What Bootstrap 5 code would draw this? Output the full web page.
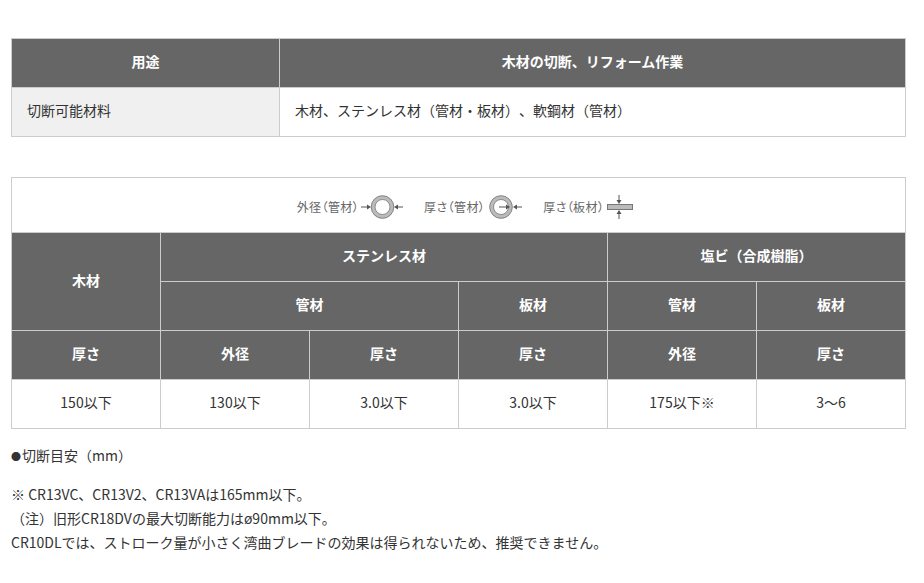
<!DOCTYPE html>
<html lang="ja"><head><meta charset="utf-8"><title>切断能力</title>
<link href="https://cdn.jsdelivr.net/npm/bootstrap@5.3.0/dist/css/bootstrap.min.css" rel="stylesheet">
<style>
body{font-family:"Noto Sans CJK JP","Noto Sans",sans-serif;font-size:14px;color:#333;background:#fff;text-spacing-trim:space-all}
.page-wrap{padding:38px 18px 0 11px}
.spec-table{table-layout:fixed;width:100%;margin:0;border-collapse:collapse;font-size:14px;line-height:24px}
.spec-table th,.spec-table td{border:1px solid #ccc;padding:10px 15px 14px;height:49px;vertical-align:middle;text-align:center;font-weight:400;color:#333;background:#fff;box-shadow:none}
.spec-table th{background:#666;color:#fff;font-weight:700}
.spec-table td.lab{background:#f0f0f0;text-align:left}
.spec-table td.val{text-align:left}
.first-tb{margin-bottom:40px}
.spec-table td.cap-cell{height:55px;padding:4px 0 0 14px;font-size:12px;color:#666}
.cap-item{display:flex;align-items:center;gap:4px;line-height:1;font-feature-settings:"palt";letter-spacing:.4px}
.cap-item.cap-tight{gap:2px}
.cap-row{gap:21px}
.notes{font-size:14px;line-height:24px;color:#333}
.notes p{margin:0}
.notes p.gauge{margin:14px 0 13px}
.gauge-dot{font-size:10px;margin-right:1px}
</style></head><body>
<div class="page-wrap">
<table class="table spec-table first-tb">
<colgroup><col style="width:268px"><col></colgroup>
<tr><th>用途</th><th>木材の切断、リフォーム作業</th></tr>
<tr><td class="lab">切断可能材料</td><td class="val">木材、ステンレス材（管材・板材）、軟鋼材（管材）</td></tr>
</table>
<table class="table spec-table">
<tr><td colspan="6" class="cap-cell"><div class="d-flex justify-content-center align-items-center cap-row">
<span class="cap-item cap-tight">外径（管材）<svg width="42" height="24" viewBox="0 0 42 24"><circle cx="21.500" cy="12" r="9.500" fill="none" stroke="#bbb" stroke-width="4"/><circle cx="21.500" cy="12" r="11.300" fill="none" stroke="#777" stroke-width=".8"/><circle cx="21.500" cy="12" r="7.500" fill="none" stroke="#777" stroke-width=".8"/><path d="M0 12h7" stroke="#555" fill="none"/><path d="M6 9.500l4 2.500-4 2.500zM37 9.500l-4 2.500 4 2.500z" fill="#555"/><path d="M42 12h-7" stroke="#555" fill="none"/></svg></span>
<span class="cap-item">厚さ（管材）<svg width="33" height="24" viewBox="0 0 33 24"><circle cx="12" cy="12" r="9.500" fill="none" stroke="#bbb" stroke-width="4"/><circle cx="12" cy="12" r="11.300" fill="none" stroke="#777" stroke-width=".8"/><circle cx="12" cy="12" r="7.500" fill="none" stroke="#777" stroke-width=".8"/><path d="M10 12h8M33 12h-7" stroke="#555" fill="none"/><path d="M17 9.500l4 2.500-4 2.500zM28 9.500l-4 2.500 4 2.500z" fill="#555"/></svg></span>
<span class="cap-item cap-tight">厚さ（板材）<svg width="28" height="24" viewBox="0 0 28 24"><rect x="1.500" y="9.500" width="25" height="5" fill="#bbb" stroke="#777"/><path d="M13 0v6M13 24v-6" stroke="#555" fill="none"/><path d="M10.500 5l2.500 4 2.500-4zM10.500 19l2.500-4 2.500 4z" fill="#555"/></svg></span>
</div></td></tr>
<tr><th rowspan="2">木材</th><th colspan="3">ステンレス材</th><th colspan="2">塩ビ（合成樹脂）</th></tr>
<tr><th colspan="2">管材</th><th>板材</th><th>管材</th><th>板材</th></tr>
<tr><th>厚さ</th><th>外径</th><th>厚さ</th><th>厚さ</th><th>外径</th><th>厚さ</th></tr>
<tr><td>150以下</td><td>130以下</td><td>3.0以下</td><td>3.0以下</td><td>175以下※</td><td>3～6</td></tr>
</table>
<div class="notes">
<p class="gauge"><span class="gauge-dot">●</span>切断目安（mm）</p>
<p>※ CR13VC、CR13V2、CR13VAは165mm以下。</p>
<p>（注）旧形CR18DVの最大切断能力はø90mm以下。</p>
<p>CR10DLでは、ストローク量が小さく湾曲ブレードの効果は得られないため、推奨できません。</p>
</div>
</div>
<script src="https://cdn.jsdelivr.net/npm/bootstrap@5.3.0/dist/js/bootstrap.bundle.min.js"></script>
</body></html>
